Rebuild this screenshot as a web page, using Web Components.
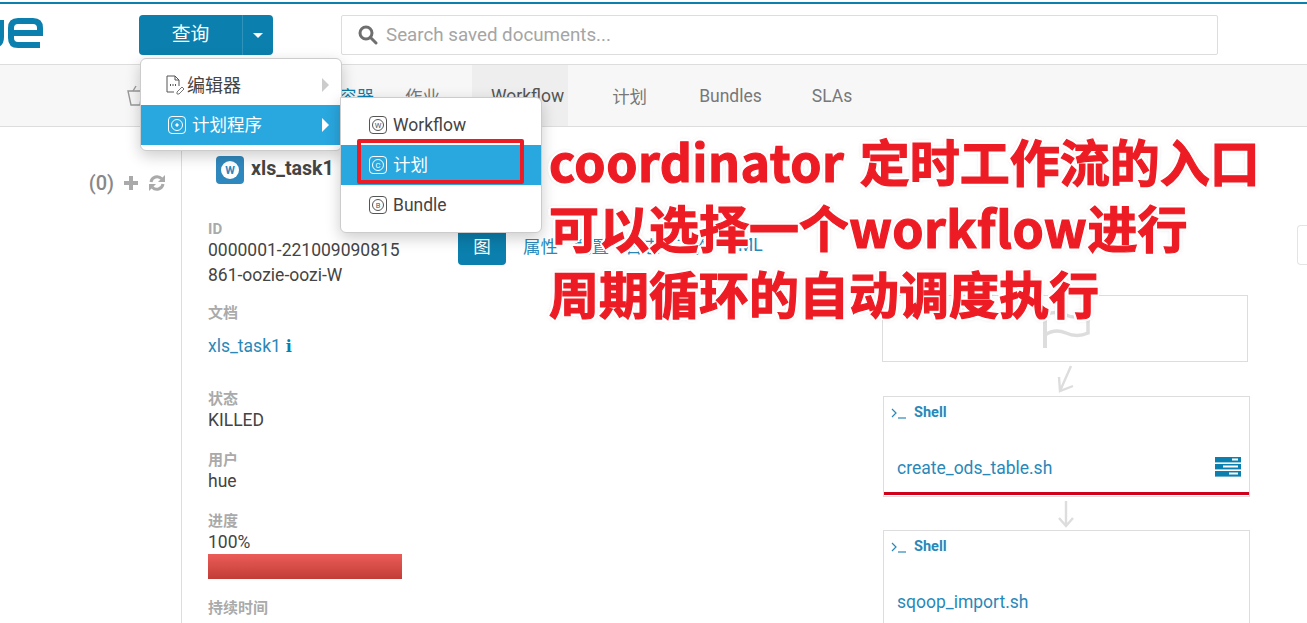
<!DOCTYPE html>
<html lang="zh">
<head>
<meta charset="utf-8">
<title>Hue</title>
<style>
  html, body { margin: 0; height: 100%; overflow: hidden; background: #fff; }
  body { font-family: Roboto, "Noto Sans CJK SC", sans-serif; font-size: 17.5px; color: #444; }
  #app { position: relative; height: 623px; overflow: hidden; }
</style>
</head>
<body>
<div id="app">
  <hue-topbar></hue-topbar>
  <hue-subnav></hue-subnav>
  <hue-main></hue-main>
  <hue-menus></hue-menus>
  <hue-note></hue-note>
</div>

<script>
const CJK = 'Roboto, "Noto Sans CJK SC", sans-serif';

class HueTopbar extends HTMLElement {
  connectedCallback() {
    this.attachShadow({ mode: 'open' });
    this.shadowRoot.innerHTML = `
      <style>
        :host {
          display: block;
          box-sizing: border-box;
          height: 63px;
          margin-top: 2px;
          border-top: 2px solid #0b7fad;
          border-bottom: 1px solid #ddd;
          font-family: ${CJK};
        }
        .row { display: flex; align-items: flex-start; padding-top: 11px; }
        .logo { width: 139px; flex: none; height: 40px; }
        .logo svg { display: block; }
        .btn {
          display: flex;
          width: 134px;
          height: 40px;
          border-radius: 4px;
          background: #0b7fad;
          color: #fff;
          font-size: 18.75px;
          line-height: 40px;
        }
        .btn .main { width: 103px; text-align: center; }
        .btn .caret {
          flex: 1;
          border-left: 1px solid #2f93bc;
          display: flex;
          align-items: center;
          justify-content: center;
        }
        .btn .caret i {
          border: 5px solid transparent;
          border-top-color: #fff;
          border-bottom: 0;
        }
        .search {
          box-sizing: border-box;
          margin-left: 68px;
          width: 877px;
          height: 40px;
          border: 1px solid #ddd;
          border-radius: 2px;
          display: flex;
          align-items: center;
          padding: 0 0 1px 16px;
          gap: 8px;
          color: #a5a5a5;
          font-size: 18.75px;
        }
      </style>
      <div class="row">
        <div class="logo">
          <svg width="44" height="40" viewBox="0 0 44 40" fill="none" stroke="#0b7fad" stroke-width="6">
            <path d="M1 5v17q0 8-8 8"/>
            <path d="M11 18h29v-5q0-7-7-7H18q-7 0-7 7v10q0 7 7 7h22"/>
          </svg>
        </div>
        <div class="btn"><div class="main">查询</div><div class="caret"><i></i></div></div>
        <div class="search">
          <svg width="20" height="20" viewBox="0 0 20 20" fill="none" stroke="#6f6f6f" stroke-width="3">
            <circle cx="8" cy="8" r="6"/><path d="M12.5 12.5l5.5 5.5" stroke-linecap="round"/>
          </svg>
          <span>Search saved documents...</span>
        </div>
      </div>
    `;
  }
}
customElements.define('hue-topbar', HueTopbar);

class HueSubnav extends HTMLElement {
  connectedCallback() {
    this.attachShadow({ mode: 'open' });
    this.shadowRoot.innerHTML = `
      <style>
        :host {
          display: block;
          box-sizing: border-box;
          height: 62px;
          background: #f7f7f7;
          border-bottom: 1px solid #ddd;
          font-family: ${CJK};
          font-size: 17.5px;
          color: #787878;
        }
        .row { display: flex; height: 61px; align-items: center; padding-left: 127px; }
        .basket { width: 212px; flex: none; }
        .basket svg { display: block; }
        a { display: flex; align-items: center; height: 61px; }
        .on { color: #0b7fad; width: 66px; }
        .jobs { width: 67px; }
        .wf { background: #eee; color: #555; padding: 0 4px 0 19px; margin-right: 44px; }
        .plan { margin-right: 52px; }
        .bundles { margin-right: 50px; }
      </style>
      <div class="row">
        <div class="basket">
          <svg width="24" height="24" viewBox="0 0 24 24" fill="none" stroke="#999" stroke-width="1.4">
            <path d="M1 7h14l-2 14H4z"/><path d="M6 7l3-5"/>
          </svg>
        </div>
        <a class="on">容器</a>
        <a class="jobs">作业</a>
        <a class="wf">Workflow</a>
        <a class="plan">计划</a>
        <a class="bundles">Bundles</a>
        <a>SLAs</a>
      </div>
    `;
  }
}
customElements.define('hue-subnav', HueSubnav);

class HueField extends HTMLElement {
  connectedCallback() {
    this.attachShadow({ mode: 'open' });
    this.shadowRoot.innerHTML = `
      <style>
        :host { display: block; margin-bottom: var(--gap, 17px); }
        .label { font-size: 15px; font-weight: 700; color: #aaa; line-height: 20px; }
        .value { font-size: 17.5px; line-height: 25px; color: #444; word-break: break-all; margin-top: var(--vm, 0); }
      </style>
      <div class="label">${this.getAttribute('label')}</div>
      <div class="value"><slot></slot></div>
    `;
  }
}
customElements.define('hue-field', HueField);

class HueNode extends HTMLElement {
  connectedCallback() {
    this.attachShadow({ mode: 'open' });
    this.shadowRoot.innerHTML = `
      <style>
        :host {
          display: block;
          box-sizing: border-box;
          width: 367px;
          height: 101px;
          margin-left: 1px;
          border: 1px solid #ddd;
          padding: 7px 8px 0 7px;
          color: #2a88b8;
          position: relative;
        }
        .head { display: flex; align-items: center; gap: 7px; height: 17px; font-size: 14.5px; font-weight: 700; color: #2a88b8; }
        .head svg { display: block; }
        .name { margin: 35px 0 0 6px; font-size: 17.5px; line-height: 24px; display: flex; justify-content: space-between; align-items: center; color: #2a88b8; }
        .bar { display: none; position: absolute; left: 0; right: 0; bottom: 1px; height: 3px; background: #d0021b; }
        :host([failed]) .bar { display: block; }
      </style>
      <div class="head">
        <svg width="16" height="12" viewBox="0 0 16 12" fill="none" stroke="#2a88b8" stroke-width="1.2">
          <path d="M1 2l4 4-4 4"/><path d="M7 11h8"/>
        </svg>
        <span>Shell</span>
      </div>
      <div class="name"><span><slot></slot></span><slot name="icon"></slot></div>
      <div class="bar"></div>
    `;
  }
}
customElements.define('hue-node', HueNode);

class HueMain extends HTMLElement {
  connectedCallback() {
    this.attachShadow({ mode: 'open' });
    this.shadowRoot.innerHTML = `
      <style>
        :host {
          display: flex;
          height: 496px;
          font-family: ${CJK};
          color: #444;
          position: relative;
        }
        .side {
          box-sizing: border-box;
          width: 182px;
          flex: none;
          border-right: 1px solid #ddd;
          padding: 44px 15px 0 0;
          display: flex;
          justify-content: flex-end;
          align-items: flex-start;
        }
        .side .in { display: flex; align-items: center; gap: 9px; color: #888; font-size: 20px; font-weight: 500; height: 24px; }
        .side svg { display: block; }
        .detail { box-sizing: border-box; width: 276px; flex: none; padding: 29px 0 0 26px; }
        .title { display: flex; align-items: center; gap: 7px; margin: 0 0 35px 8px; height: 28px; font-size: 19.6px; font-weight: 700; color: #444; }
        .title span { margin-top: -4px; }
        .title svg { display: block; }
        .fields { width: 194px; }
        .link { color: #2a88b8; display: inline-flex; align-items: center; gap: 5px; margin-top: 11px; }
        .link b { font: 700 16px "DejaVu Serif", serif; color: #0b7fad; }
        .bar { height: 25px; margin-top: -1px; background: linear-gradient(#eb5c58, #c23d37); }
        .content { flex: 1; min-width: 0; padding-top: 103px; position: relative; }
        .tabs { display: flex; height: 35px; font-size: 17.5px; color: #2a88b8; }
        .tabs div { display: flex; align-items: center; justify-content: center; box-sizing: border-box; padding-bottom: 5px; }
        .tabs .active { width: 48px; height: 35px; background: #0b7fad; color: #fff; border-radius: 0 0 4px 4px; margin-right: 17px; }
        .tabs .t { margin-right: 16px; }
        .graph { margin: 30px 0 0 424px; width: 368px; }
        .start { box-sizing: border-box; width: 366px; height: 67px; border: 1px solid #ddd; display: flex; justify-content: center; padding-top: 13px; }
        .arrow { display: flex; justify-content: center; height: 34px; align-items: center; }
        .arrow.second { height: 33px; }
        svg { display: block; }
        .edge { position: absolute; right: 0; top: 98px; width: 10px; height: 40px; box-sizing: border-box; border: 1px solid #e4e4e4; border-right: 0; border-radius: 4px 0 0 4px; background: #fff; }
      </style>
      <div class="side">
        <div class="in">
          <span>(0)</span>
          <svg width="16" height="16" viewBox="0 0 16 16" fill="#aaa"><path d="M6 1h4v5h5v4h-5v5H6v-5H1V6h5z"/></svg>
          <svg width="18" height="18" viewBox="0 0 18 18" fill="none" stroke="#aaa" stroke-width="3">
            <path d="M3 8a6.2 6.2 0 0 1 10.7-3.2"/><path d="M15 10a6.2 6.2 0 0 1-10.7 3.2"/>
            <path d="M17 1v7h-7z" fill="#aaa" stroke="none"/><path d="M1 17v-7h7z" fill="#aaa" stroke="none"/>
          </svg>
        </div>
      </div>
      <div class="detail">
        <div class="title">
          <svg width="28" height="28" viewBox="0 0 28 28">
            <rect width="28" height="28" rx="4" fill="#2f88bd"/>
            <circle cx="14" cy="14" r="9" fill="#fff"/>
            <text x="14" y="18" font-family="Roboto" font-size="11" font-weight="700" text-anchor="middle" fill="#2f88bd">W</text>
          </svg>
          <span>xls_task1</span>
        </div>
        <div class="fields">
          <hue-field label="ID" style="--vm:-1px;--gap:15px">0000001-221009090815861-oozie-oozi-W</hue-field>
          <hue-field label="文档" style="--gap:30px"><span class="link">xls_task1 <b>i</b></span></hue-field>
          <hue-field label="状态" style="--vm:-1px">KILLED</hue-field>
          <hue-field label="用户" style="--vm:-1px">hue</hue-field>
          <hue-field label="进度" style="--vm:-1px;--gap:19px">100%<div class="bar"></div></hue-field>
          <hue-field label="持续时间">8s</hue-field>
        </div>
      </div>
      <div class="content">
        <div class="tabs">
          <div class="active">图</div>
          <div class="t">属性</div>
          <div class="t">配置</div>
          <div class="t">日志</div>
          <div class="t">动作</div>
          <div class="t">XML</div>
        </div>
        <div class="graph">
          <div class="start">
            <svg width="52" height="40" viewBox="0 0 52 40" fill="none" stroke="#ddd" stroke-width="3.5">
              <path d="M6 2v37" stroke-width="4"/><path d="M6 6q10-5 21 0t22-2v20q-11 5-22 0t-21 2"/>
            </svg>
          </div>
          <div class="arrow">
            <svg width="20" height="28" viewBox="0 0 20 28" fill="none" stroke="#ddd" stroke-width="2.4">
              <path d="M15 1L4 26M3 12l1 14 13-5"/>
            </svg>
          </div>
          <hue-node failed>create_ods_table.sh
            <svg slot="icon" width="26" height="20" viewBox="0 0 26 20" style="margin-top:-3px">
              <rect width="26" height="5.4" fill="#0b7fad"/><rect y="7" width="26" height="5.4" fill="#0b7fad"/><rect y="14" width="26" height="5.6" fill="#0b7fad"/>
              <rect x="17" y="1.5" width="6" height="2" fill="#fff"/><rect x="8" y="8.5" width="15" height="2" fill="#fff"/><rect x="14" y="15.5" width="9" height="2" fill="#fff"/>
            </svg>
          </hue-node>
          <div class="arrow second">
            <svg width="18" height="28" viewBox="0 0 18 28" fill="none" stroke="#ddd" stroke-width="2.4">
              <path d="M9 1v25M2 18l7 8 7-8"/>
            </svg>
          </div>
          <hue-node>sqoop_import.sh</hue-node>
        </div>
        <div class="edge"></div>
      </div>
    `;
  }
}
customElements.define('hue-main', HueMain);

class HueMenuItem extends HTMLElement {
  connectedCallback() {
    const letter = this.getAttribute('letter') || '';
    const on = this.hasAttribute('on');
    const stroke = on ? '#fff' : '#555';
    this.attachShadow({ mode: 'open' });
    this.shadowRoot.innerHTML = `
      <style>
        :host {
          display: flex;
          align-items: center;
          height: 40px;
          padding-left: var(--pad, 28px);
          gap: 6px;
          color: #444;
          font-family: ${CJK};
          font-size: 17.5px;
          position: relative;
        }
        :host([on]) { background: #29a7df; color: #fff; }
        svg { display: block; flex: none; }
        span { margin-top: -1px; }
        :host([on]) span { margin-top: -4px; }
        .arr { position: absolute; right: 12px; top: 13px; width: 0; height: 0; border: 7px solid transparent; border-right: 0; border-left-color: #ccc; }
        :host([on]) .arr { border-left-color: #fff; }
        :host(:not([more])) .arr { display: none; }
      </style>
      <svg width="18" height="18" viewBox="0 0 18 18" fill="none" stroke="${stroke}" stroke-width="1">
        <rect x=".5" y=".5" width="17" height="17" rx="3.5"/>
        <circle cx="9" cy="9" r="5.5"/>
        ${letter ? `<text x="9" y="11.5" font-family="Roboto" font-size="7.5" text-anchor="middle" fill="${stroke}" stroke="none">${letter}</text>` : `<circle cx="9" cy="9" r="1.2" fill="${stroke}"/>`}
      </svg>
      <span><slot></slot></span>
      <i class="arr"></i>
    `;
  }
}
customElements.define('hue-menu-item', HueMenuItem);

class HueMenus extends HTMLElement {
  connectedCallback() {
    this.attachShadow({ mode: 'open' });
    this.shadowRoot.innerHTML = `
      <style>
        :host { display: block; }
        .menu {
          position: absolute;
          box-sizing: border-box;
          background: #fff;
          border: 1px solid #ccc;
          border-radius: 6px;
          box-shadow: 0 5px 15px rgba(0,0,0,.2);
        }
        .one { left: 140px; top: 58px; width: 202px; height: 93px; padding: 6px 0; overflow: hidden; }
        .two { left: 340px; top: 97px; width: 202px; height: 136px; padding: 7px 0; border-radius: 0 6px 6px 6px; }
        .ed { display: flex; align-items: center; height: 40px; padding-left: 24px; gap: 2px; color: #444; font-size: 17.5px; position: relative; font-family: ${CJK}; }
        .ed svg { display: block; }
        .ed span { font-size: 18px; margin-top: -2px; }
        .ed i { position: absolute; right: 12px; top: 13px; border: 7px solid transparent; border-right: 0; border-left-color: #ccc; }
      </style>
      <div class="menu one">
        <div class="ed">
          <svg width="20" height="20" viewBox="0 0 20 20" fill="none" stroke="#555" stroke-width="1">
            <path d="M2 1h8l4 4v6M10 1v4h4M2 1v16h7"/>
            <path d="M5 10h1M7.5 10h1M10 10h1" stroke-width="2"/>
            <path d="M12 17l5-5 2 2-5 5h-2z" stroke="#777"/>
          </svg>
          <span>编辑器</span><i></i>
        </div>
        <hue-menu-item on more style="--pad:27px">计划程序</hue-menu-item>
      </div>
      <div class="menu two">
        <hue-menu-item letter="W">Workflow</hue-menu-item>
        <hue-menu-item letter="C" on>计划</hue-menu-item>
        <hue-menu-item letter="B">Bundle</hue-menu-item>
      </div>
    `;
  }
}
customElements.define('hue-menus', HueMenus);

class HueNote extends HTMLElement {
  connectedCallback() {
    this.attachShadow({ mode: 'open' });
    const white = [[3,0],[-3,0],[0,3],[0,-3],[2,2],[-2,2],[2,-2],[-2,-2]]
      .map(([x, y]) => `${x}px ${y}px 0 #fff`).join(', ');
    this.shadowRoot.innerHTML = `
      <style>
        :host { display: block; }
        .rect { position: absolute; left: 357px; top: 139px; width: 167px; height: 45px; box-sizing: border-box; border: 4px solid #ed1c24; border-radius: 2px; }
        .text {
          position: absolute;
          left: 549px;
          top: 127px;
          font-family: "Noto Sans CJK SC", sans-serif;
          font-weight: 700;
          font-size: 50px;
          line-height: 66px;
          color: #ed1c24;
          white-space: nowrap;
          word-spacing: 4px;
          -webkit-text-stroke: 1.2px #ed1c24;
          text-shadow: ${white}, 0 0 5px rgba(0,0,0,.35);
        }
        .lat { letter-spacing: .5px; }
      </style>
      <div class="rect"></div>
      <div class="text"><span class="lat">coordinator</span> 定时工作流的入口<br>可以选择一个<span class="lat">workflow</span>进行<br>周期循环的自动调度执行</div>
    `;
  }
}
customElements.define('hue-note', HueNote);
</script>
</body>
</html>
